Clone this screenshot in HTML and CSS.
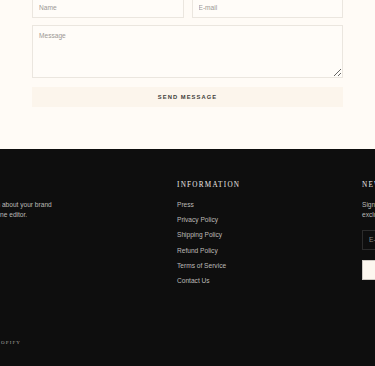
FILE: index.html
```html
<!DOCTYPE html>
<html lang="en">
<head>
<meta charset="utf-8">
<title>Contact</title>
<link rel="stylesheet" href="styles.css">
</head>
<body>
<section class="contact">
  <form class="contact-form">
    <div class="field-row">
      <input class="field" type="text" placeholder="Name">
      <input class="field" type="email" placeholder="E-mail">
    </div>
    <textarea class="field field-area" placeholder="Message"></textarea>
    <button class="send-btn" type="button">SEND MESSAGE</button>
  </form>
</section>
<footer class="footer">
  <div class="footer-cols">
    <div class="footer-col">
      <h3 class="footer-heading">About</h3>
      <p class="footer-text"><span class="line">Share information about your brand</span><span class="line">Set this in the online editor.</span></p>
    </div>
    <div class="footer-col">
      <h3 class="footer-heading">Information</h3>
      <ul class="footer-links">
        <li>Press</li>
        <li>Privacy Policy</li>
        <li>Shipping Policy</li>
        <li>Refund Policy</li>
        <li>Terms of Service</li>
        <li>Contact Us</li>
      </ul>
    </div>
    <div class="footer-col">
      <h3 class="footer-heading">Newsletter</h3>
      <p class="footer-text"><span class="line">Sign up to our newsletter for updates and</span><span class="line">exclusive offers on new arrivals.</span></p>
      <input class="news-input" type="email" placeholder="E-mail">
      <button class="news-btn" type="button">SUBSCRIBE</button>
    </div>
  </div>
  <div class="footer-bottom">
    <span class="copyright">© 2024, Store Name. Powered by Shopify</span>
  </div>
</footer>
</body>
</html>
```

FILE: styles.css
```css
html, body {
  margin: 0;
  padding: 0;
}
body {
  width: 375px;
  height: 366px;
  overflow: hidden;
  background: #fffbf6;
  font-family: "Liberation Sans", Arial, sans-serif;
}
.contact {
  background: #fffbf6;
  padding: 0 32px 42px;
}
.contact-form {
  margin-top: -3px;
  display: flex;
  flex-direction: column;
}
.field-row {
  display: grid;
  grid-template-columns: 1fr 1fr;
  gap: 8px;
}
.field {
  box-sizing: border-box;
  display: block;
  width: 100%;
  height: 21px;
  margin: 0;
  padding: 0 6px;
  border: 1px solid #ebe6df;
  border-radius: 0;
  background: #fffcf8;
  font-family: "Liberation Sans", Arial, sans-serif;
  font-size: 6.6px;
  color: #555;
  outline: none;
}
.field::placeholder {
  color: #9c9894;
}
.field-area {
  margin-top: 7px;
  height: 53px;
  padding: 6px 6px;
  resize: vertical;
  line-height: 1.3;
}
.send-btn {
  margin-top: 9px;
  height: 20px;
  border: 0;
  padding: 0;
  background: #fcf5ec;
  font-family: "Liberation Sans", Arial, sans-serif;
  font-weight: bold;
  font-size: 5.8px;
  letter-spacing: 1.05px;
  color: #3f3d3a;
}
.footer {
  background: #0e0e0e;
  padding-top: 31px;
  height: 220px;
}
.footer-cols {
  display: grid;
  grid-template-columns: 229px 185px 185px;
  margin-left: -52px;
}
.footer-col {
  display: flex;
  flex-direction: column;
  align-items: flex-start;
}
.footer-heading {
  margin: 0 0 7px;
  font-family: "Liberation Serif", "Times New Roman", serif;
  font-weight: normal;
  font-size: 7.2px;
  line-height: 10px;
  letter-spacing: 1.25px;
  text-transform: uppercase;
  color: #eceae6;
  white-space: nowrap;
}
.footer-text {
  margin: 3px 0 0;
  font-size: 6.6px;
  line-height: 10.4px;
  color: #bdbbb8;
  white-space: nowrap;
}
.line {
  display: block;
}
.footer-links {
  list-style: none;
  margin: 0;
  padding: 0;
  font-size: 6.6px;
  line-height: 15.2px;
  color: #bdbbb8;
  white-space: nowrap;
}
.news-input {
  box-sizing: border-box;
  margin-top: 9px;
  width: 160px;
  height: 20px;
  padding: 0 6px;
  border: 1px solid #2c2c2c;
  background: transparent;
  font-family: "Liberation Sans", Arial, sans-serif;
  font-size: 6.6px;
  color: #ccc;
  outline: none;
}
.news-input::placeholder {
  color: #8d8b88;
}
.news-btn {
  margin-top: 10px;
  width: 160px;
  height: 20px;
  border: 1px solid #cfcac3;
  background: #fdf7ef;
  font-size: 5.8px;
  letter-spacing: 1px;
  color: #222;
}
.footer-bottom {
  display: flex;
  justify-content: flex-end;
  width: 21px;
  margin-top: 51px;
}
.copyright {
  flex: none;
  font-family: "Liberation Serif", "Times New Roman", serif;
  font-size: 5px;
  line-height: 8px;
  letter-spacing: 1.1px;
  text-transform: uppercase;
  color: #a8a6a2;
  white-space: nowrap;
}
```
